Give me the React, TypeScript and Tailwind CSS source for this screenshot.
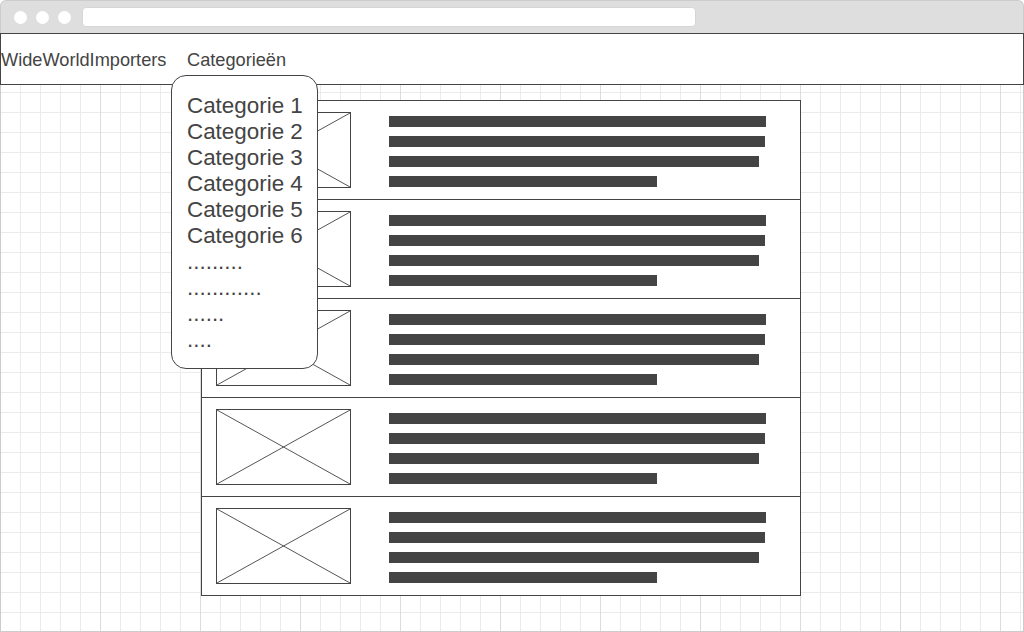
import React from "react";

const bars = [377, 376, 370, 268];

function Placeholder() {
  return (
    <div className="w-[135px] h-[76px] border border-[#444] shrink-0 relative">
      <svg className="absolute inset-0 w-full h-full" viewBox="0 0 100 100" preserveAspectRatio="none">
        <line x1="0" y1="0" x2="100" y2="100" stroke="#555" strokeWidth="1" vectorEffect="non-scaling-stroke" />
        <line x1="100" y1="0" x2="0" y2="100" stroke="#555" strokeWidth="1" vectorEffect="non-scaling-stroke" />
      </svg>
    </div>
  );
}

function Row({ first }: { first?: boolean }) {
  return (
    <div className={"flex items-start bg-white " + (first ? "h-[98px]" : "h-[99px] border-t border-[#444]")}>
      <div className="ml-[14px] mt-[11px]">
        <Placeholder />
      </div>
      <div className="ml-[38px] mt-[15px] flex flex-col gap-[9px]">
        {bars.map((w, i) => (
          <div key={i} className="h-[11px] bg-[#444]" style={{ width: w }} />
        ))}
      </div>
    </div>
  );
}

export default function App() {
  const items = ["Categorie 1", "Categorie 2", "Categorie 3", "Categorie 4", "Categorie 5", "Categorie 6"];
  const dots = [".........", "............", "......", "...."];
  return (
    <div className="w-[1024px] h-[632px] flex flex-col relative bg-white font-['Liberation_Sans',Arial,sans-serif] text-[#444]">
      {/* browser chrome */}
      <div className="h-[33px] shrink-0 bg-[#dedede] border border-b-0 border-[#cccccc] rounded-t-[6px] flex items-center">
        <div className="flex items-center gap-[9px] ml-[13px]">
          <div className="w-[13px] h-[13px] rounded-full bg-white" />
          <div className="w-[13px] h-[13px] rounded-full bg-white" />
          <div className="w-[13px] h-[13px] rounded-full bg-white" />
        </div>
        <div className="ml-[11px] w-[614px] h-[20px] bg-white rounded-[4px] border border-[#d6d6d6] mt-[-1px]" />
      </div>
      {/* navbar */}
      <div className="h-[52px] shrink-0 border border-[#444] bg-white flex items-center text-[18.2px] pt-[2px]">
        <div className="w-[186px] leading-[20px]">WideWorldImporters</div>
        <div className="leading-[20px]">Categorieën</div>
      </div>
      {/* canvas */}
      <div className="flex-1 border-x border-b border-[#cccccc] bg-origin-border bg-[linear-gradient(to_right,#dcdcdc_1px,transparent_1px),linear-gradient(to_right,#ebebeb_1px,transparent_1px),linear-gradient(to_bottom,transparent_7px,#ebebeb_7px,#ebebeb_8px,transparent_8px)] bg-[length:100px_100%,20px_100%,100%_20px] pt-[15px] pl-[200px]">
        <div className="w-[600px] border border-[#444] flex flex-col">
          <Row first />
          <Row />
          <Row />
          <Row />
          <Row />
        </div>
      </div>
      {/* dropdown */}
      <div className="absolute left-[171px] top-[75px] w-[147px] h-[294px] bg-white border border-[#444] rounded-[15px] pl-[15px] pt-[17px] text-[22.4px] leading-[26px]">
        {items.map((t) => (
          <div key={t}>{t}</div>
        ))}
        {dots.map((t, i) => (
          <div key={i}>{t}</div>
        ))}
      </div>
    </div>
  );
}
